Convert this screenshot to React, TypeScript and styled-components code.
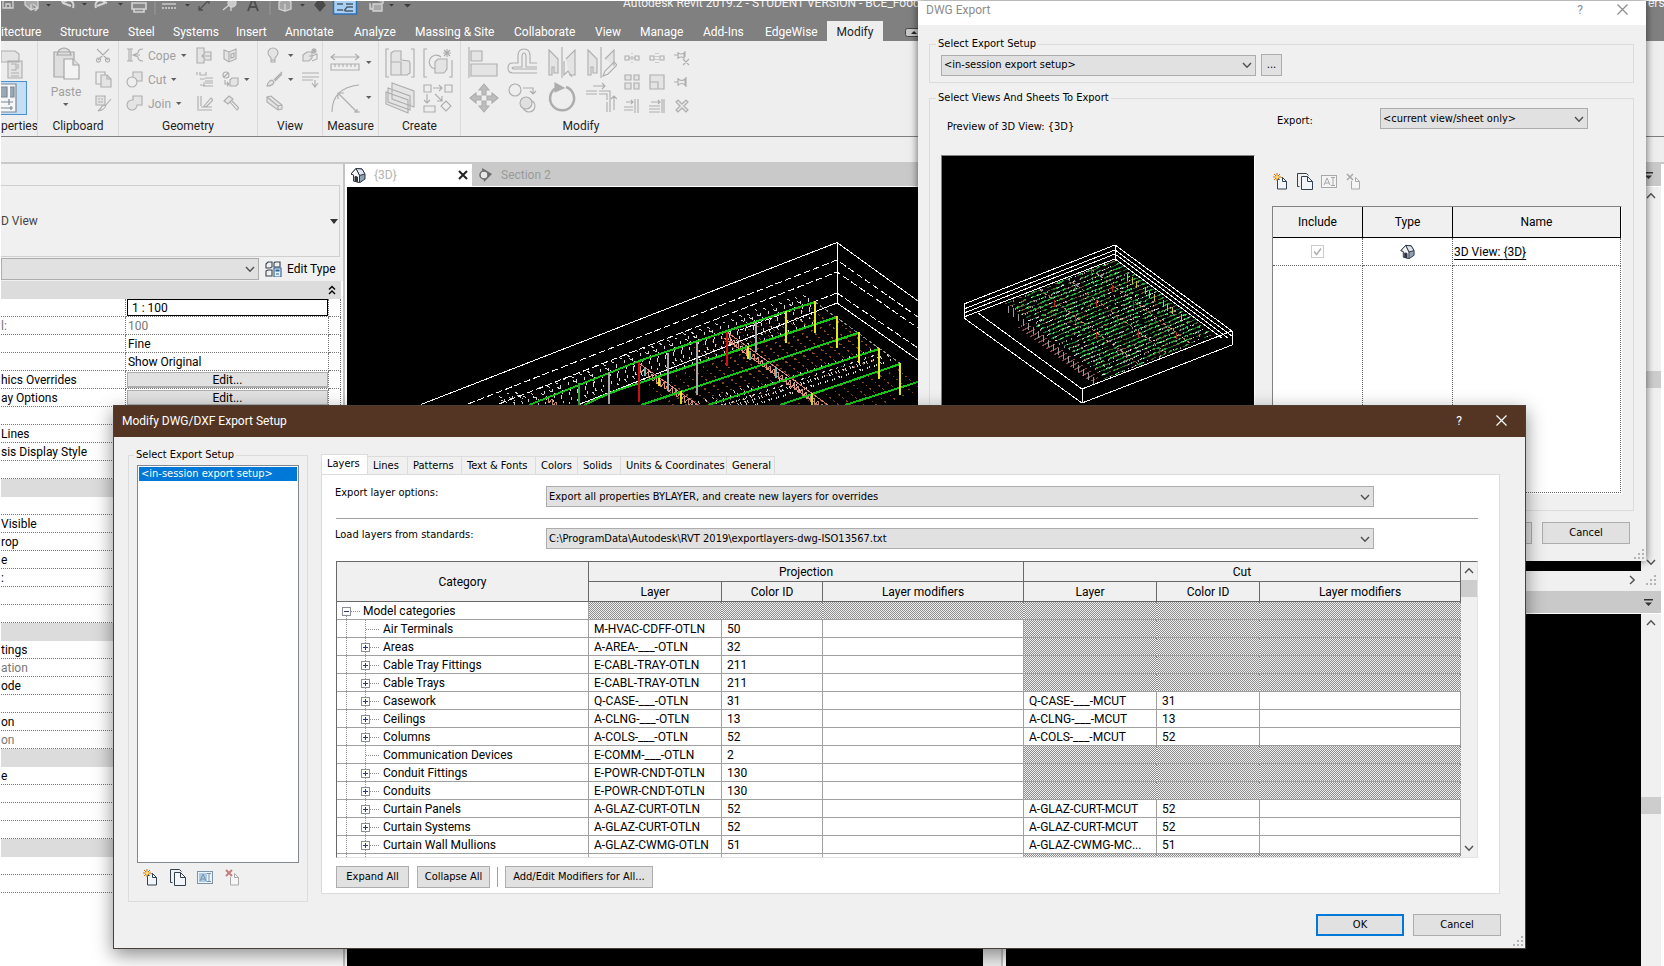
import React from 'react';
import styled, { createGlobalStyle, css } from 'styled-components';

const ribbonFont = 'Roboto, "Open Sans", sans-serif';
const dialogFont = '"DejaVu Sans Condensed", "DejaVu Sans", sans-serif';

const GlobalStyle = createGlobalStyle`
  *, *::before, *::after { box-sizing: border-box; }
  body { margin: 0; background: #fff; font: 12px/16px ${ribbonFont}; color: #1e1e1e; }
  button, select, input { font: inherit; color: inherit; margin: 0; }
  button { cursor: default; }
`;

/* ---------- shared parts ---------- */

const Desktop = styled.div`
  position: relative;
  height: 100vh;
  overflow: hidden;
  padding: 1px 0 0 1px;
`;

const Svg = styled.svg`
  display: block;
  flex: none;
`;

const Spacer = styled.div<{ $grow?: number }>`
  flex: ${p => p.$grow ?? 1};
`;

const BareButton = styled.button`
  display: flex;
  align-items: center;
  gap: 5px;
  padding: 0;
  border: 0;
  background: none;
`;

const PushButton = styled.button<{ $w: number; $default?: boolean }>`
  width: ${p => p.$w}px;
  height: 22px;
  padding: 0;
  font: 11px/14px ${dialogFont};
  color: #000;
  background: #e1e1e1;
  border: ${p => (p.$default ? '2px solid #0078d7' : '1px solid #adadad')};
`;

const SelectBox = styled.div<{ $w?: number }>`
  display: grid;
  align-items: center;
  height: 21px;
  ${p => (p.$w ? `width: ${p.$w}px; flex: none;` : 'flex: 1;')}
  background: #e1e1e1;
  border: 1px solid #adadad;
  select {
    grid-area: 1 / 1;
    appearance: none;
    width: 100%;
    height: 19px;
    padding: 0 20px 0 2px;
    border: 0;
    background: none;
    color: #000;
  }
  svg {
    grid-area: 1 / 1;
    justify-self: end;
    margin-right: 3px;
    pointer-events: none;
  }
`;

const Chevron = ({ dir = 'down', size = 10 }: { dir?: 'up' | 'down' | 'right'; size?: number }) => (
  <Svg width={size} height={size} viewBox="0 0 10 10" fill="none" stroke="#505050" strokeWidth="1.4">
    <path d={dir === 'down' ? 'M1 3l4 4.200l4-4.200' : dir === 'up' ? 'M1 7l4-4.200l4 4.200' : 'M3 1l4.200 4l-4.200 4'} />
  </Svg>
);

const Combo = ({ label, value, width, id }: { label: string; value: string; width?: number; id?: string }) => (
  <SelectBox $w={width}>
    <select aria-label={label} id={id} defaultValue={value}>
      <option>{value}</option>
    </select>
    <Chevron />
  </SelectBox>
);

const Caret = ({ color = '#606060' }: { color?: string }) => (
  <Svg width="6" height="4" viewBox="0 0 6 4"><path d="M0 0h5.500l-2.750 3z" fill={color} /></Svg>
);

const HouseIcon = ({ size = 16 }: { size?: number }) => (
  <Svg width={size} height={size} viewBox="0 0 16 16" strokeLinejoin="round" stroke="#2c3440" strokeWidth="1">
    <path d="M1 7l5-5.500l6 .5l3 5.500v4.500l-5 3.500l-6-1.500v-6z" fill="#8fa0b4" />
    <path d="M6 1.500l6 .5l3 5l-5.500 1.500z" fill="#dfe6ee" />
    <path d="M1 7l5-5.500l3.500 7v7l-6-1.500v-6z" fill="#f4f6f8" />
    <path d="M5 9.500l2.500.5v4.500l-2.500-.6z" fill="#2c3440" />
  </Svg>
);

const ScrollColumn = styled.div<{ $w: number }>`
  display: flex;
  flex-direction: column;
  align-items: center;
  flex: none;
  width: ${p => p.$w}px;
  padding: 4px 0;
  background: #f0f0f0;
`;

const ScrollThumb = styled.div`
  align-self: stretch;
  height: 17px;
  background: #cdcdcd;
`;

/* ---------- Revit header ---------- */

const Header = styled.header`
  display: flex;
  flex-direction: column;
  height: 40px;
  flex: none;
  background: #808080;
  color: #fff;
`;

const QuickAccess = styled.div`
  display: flex;
  align-items: flex-start;
  height: 20px;
  overflow: hidden;
`;

const TitleText = styled.span<{ $w?: number }>`
  line-height: 4px;
  white-space: nowrap;
  color: #f2f2f2;
  ${p => p.$w && `width: ${p.$w}px;`}
`;

const TabRow = styled.nav`
  display: flex;
  align-items: stretch;
  height: 20px;
`;

const RibbonTab = styled.button<{ $w: number; $active?: boolean }>`
  width: ${p => p.$w}px;
  flex: none;
  padding: 1px 0 0;
  border: 0;
  white-space: nowrap;
  text-align: ${p => (p.$active ? 'center' : 'left')};
  background: ${p => (p.$active ? '#eee' : 'none')};
  color: ${p => (p.$active ? '#1e1e1e' : '#fff')};
`;

const ribbonTabs: [string, number][] = [
  ['itecture', 59], ['Structure', 68], ['Steel', 45], ['Systems', 63], ['Insert', 49], ['Annotate', 69],
  ['Analyze', 61], ['Massing & Site', 99], ['Collaborate', 81], ['View', 45], ['Manage', 63],
  ['Add-Ins', 62], ['EdgeWise', 62],
];

const QuickIcons = () => (
  <Svg width="622" height="15" viewBox="1 1 622 15" fill="none" stroke="#d4d4d4" strokeWidth="1.300">
    <path d="M3 0v8h10v-8M6 8v-4h4v4" />
    <path d="M25 0v5l6 5l7-3v-6M31 10v-6M33 4l5 4l-3 3" fill="#a8a8a8" />
    <path d="M71 6l-8-3M62 2v-3M62 3l6-3q7 1 5 8M97 6l8-3M107 3l-6-3q-7 1-5 8" strokeWidth="2" />
    <path d="M132 3h14v6h-14zM134 9v3h10v-3" fill="#8a8a8a" strokeWidth="1.600" />
    <path d="M162 4h14" /><path d="M162 8h14" strokeDasharray="2 1" />
    <path d="M199 10l9-9M199 6v4h4M205 0h4v4" stroke="#4e4e4e" />
    <circle cx="232" cy="3" r="4" fill="#c8c8c8" /><path d="M223 10l6-5M231 7v4" />
    <path d="M248 11l5-13l5 13M250 7h7" stroke="#4e4e4e" strokeWidth="2" />
    <path d="M279 2l6-4l6 4v7l-6 2l-6-2zM285 4v7" fill="#a4a4a4" />
    <path d="M315 5l5-7l5 7l-5 6z" fill="#4a4a4a" stroke="#4a4a4a" />
    <rect x="333.500" y="-4" width="23" height="18" fill="#a9d1f5" stroke="#2d6fb5" strokeWidth="1.500" />
    <path d="M337 4h6M337 10h6M346 4h7M344 11l3-4h6M345 11h8" stroke="#4d5c6c" />
    <path d="M370 3v6h3M373 4h9v7h-9zM376 0h7v4" fill="#a8a8a8" />
    <path d="M155 0v15M270 0v15" stroke="#989898" strokeWidth="1" />
    <path d="M46 4h5l-2.500 2.500zM82 3h5l-2.500 2.500zM118 3h5l-2.500 2.500zM185 4h5l-2.500 2.500zM300 4h5l-2.500 2.500zM389 4h5l-2.500 2.500zM404 4h7l-3.500 3.500z" fill="#3c3c3c" stroke="none" />
  </Svg>
);

/* ---------- ribbon ---------- */

const Ribbon = styled.section`
  display: flex;
  height: 96px;
  flex: none;
  background: #eee;
  border-bottom: 1px solid #7f7f7f;
`;

const RibbonPanel = styled.div<{ $w: number; $last?: boolean }>`
  display: flex;
  flex-direction: column;
  flex: none;
  width: ${p => p.$w}px;
  border-right: ${p => (p.$last ? 0 : '1px solid #d9d9d9')};
  overflow: hidden;
`;

const PanelBody = styled.div<{ $gap?: number; $pad?: number }>`
  display: flex;
  flex: 1;
  gap: ${p => p.$gap ?? 8}px;
  padding: 6px 0 0 ${p => p.$pad ?? 8}px;
`;

const PanelLabel = styled.div`
  height: 20px;
  line-height: 21px;
  text-align: center;
  white-space: nowrap;
`;

const ToolColumn = styled.div<{ $gap?: number }>`
  display: flex;
  flex-direction: column;
  gap: ${p => p.$gap ?? 7}px;
`;

const ToolButton = styled(BareButton)`
  height: 17px;
  color: #a0a0a0;
`;

const BigTool = styled(BareButton)`
  gap: 6px;
  height: 32px;
`;

const PasteTool = styled(BareButton)`
  flex-direction: column;
  gap: 3px;
  width: 30px;
  align-self: flex-start;
  color: #a0a0a0;
`;

const Tile = styled.button<{ $on?: boolean }>`
  width: 26px;
  height: 34px;
  padding: 0;
  border: 1px solid ${p => (p.$on ? '#4a90d0' : 'transparent')};
  border-left: 0;
  background: ${p => (p.$on ? '#c4dff5' : 'none')};
`;

const G = ({ s = 17, d, fill, children }: { s?: number; d?: string; fill?: string; children?: React.ReactNode }) => (
  <Svg width={s} height={s} viewBox={`0 0 ${s} ${s}`} fill="none" stroke="#adadad" strokeWidth="1.100">
    {fill && <path d={fill} fill="#e4e4e4" />}
    {d && <path d={d} />}
    {children}
  </Svg>
);

const I = {
  cut: <G d="M2 2l11 11M14 2l-11 11M1.500 13.500a2 2 0 1 0 4-1a2 2 0 1 0-4 1M10.500 12.500a2 2 0 1 0 4 1a2 2 0 1 0-4-1" />,
  copy: <G fill="M6 4h6l4 4v8h-10z" d="M6 13h-5v-12h9v3M12 4v4h4" />,
  match: <G fill="M1 1h9v9h-9z" d="M3 4h2M6 4h2M3 7h5M16 4l-6 7M11 10q-1 5-8 6q3-2 4-5z" />,
  cope: <G d="M1 2h6M1 14h6M3 2v12M5 2v12M17 2q-5 0-5 4l-5 2l5 2q0 4 5 4M7 8h7" />,
  cutGeo: <G fill="M7 1h9v9h-9z"><circle cx="6" cy="11" r="5" fill="#eee" /></G>,
  join: <G fill="M7 1h9v9h-5a5 5 0 1 1-5-5h1z" />,
  g1: <G fill="M1 1h7v4h7v8h-7v3h-7z" d="M15 9h-9M9 6l-3 3l3 3" />,
  g2: <G d="M1 1v3M4 1v3h6v-3M4 8h5M9 7h8M9 10h8M4 14h5M7 12h10M7 15h10" />,
  g3: <G d="M2 1v13M5 1v10M1 15h15M5 12h11M8 11l7-8l2 2l-7 7z" />,
  h1: <G fill="M2 3l5 2l7-3v10l-7 3l-5-3z" d="M7 5v10M9 7l4-1M9 7v4l3-1v-4" />,
  h2: <G fill="M8 9l2-2h6v6l-2 2h-6z" d="M1 4a3 3 0 1 0 6 0a3 3 0 1 0-6 0M2 6l4-4M3 9v4h4M5 11l2 2l-2 2" />,
  h3: <G fill="M2 6l5-5l4 3l-5 5z" d="M8 7l7 8l2-2l-7-7" />,
  bulb: <G fill="M5 11q-3-3-3-5a5 5 0 0 1 10 0q0 2-3 5v4h-4z" d="M5 13h4" />,
  brush: <G fill="M1 15q1-5 5-6l2 2q-1 4-7 4z" d="M16 1l-8 8M16 3l-7 7" />,
  box: <G fill="M1 2l4-1l11 9v4l-4 1l-11-8z" d="M1 2l11 9v4M12 11l4-1" />,
  v1: <G fill="M1 8l4-3h5v6l-3 3h-6z" d="M12 1v6M9 4h6M10 2l4 4M14 2l-4 4M7 9h3M10 9l5-2v5l-5 2" />,
  v2: <G d="M0 2h17M0 6h17M0 9h11" ><path d="M13 9v6M10 12l3 4l3-4" /></G>,
  splitA: <G s={16} d="M1 6h4v4h-4zM11 6h4v4h-4zM5 8h6" ><path d="M8 3v10" strokeDasharray="1 2" /></G>,
  splitB: <G s={16} d="M1 6h4v4h-4zM11 6h4v4h-4z"><path d="M7 3v10M9 3v10" strokeDasharray="1 2" /></G>,
  unpin: <G s={16} d="M0 5h4M4 2v7M4 3q3 2 6 0v5q-3-2-6 0M11 1v6M9 9l6 6M15 9l-6 6" />,
  array: <G s={16} fill="M1 1h6v5h-6zM10 1h5v5h-5zM1 9h6v6h-6zM10 9h5v6h-5z" />,
  scale: <G s={16} fill="M1 1h14v14h-14z" d="M1 8h8v7" />,
  pin: <G s={16} d="M0 8h4M4 4v8M4 5q4 3 7 0v6q-3-3-7 0M12 3v10" />,
  trim: <G s={16} d="M2 4h7M7 2l2 2l-2 2M0 9h9M0 12h9M11 1v14M14 1v14" />,
  trimM: <G s={16} d="M2 4h9M9 2l2 2l-2 2M0 8h11M0 11h11M0 14h11M13 1v14M15 1v14" />,
  del: <G s={16} fill="M2 4l2-2l4 4l4-4l2 2l-4 4l4 4l-2 2l-4-4l-4 4l-2-2l4-4z" />,
  ruler: <G s={30} d="M1 9h28M5 6l-4 3l4 3M25 6l4 3l-4 3M1 16h28v6h-28zM5 16v3M9 16v3M13 16v3M17 16v3M21 16v3M25 16v3" />,
  arc: <G s={30} d="M2 29q0-24 27-27M8 10l19 19M8 16v-6h6M24 29h6M27 26v6" />,
  asm: <G s={30} fill="M6 5l3-2h7v9l8 1l1 2v10l-3 2h-16z" d="M6 14h10M16 14v13M4 1h-3v28h3M26 1h3v28h-3" />,
  part: <G s={30} fill="M12 14l3-3h9v10l-3 4h-9z" d="M12 21a7 7 0 1 1 6-12M4 1h-3v28h3M29 12v17h-3M24 1v8M20 5h8M21 2l6 6M27 2l-6 6" />,
  group: <G s={32} fill="M7 1l22 8v16l-22-8zM3 6l22 8v14l-22-8zM1 10l22 8v13l-22-9z" />,
  similar: <G s={30} d="M1 2h7v7h-7zM22 2h7v7h-7zM10 5h9M16 2l3 3l-3 3M4 11v9M1 17l3 3l3-3M12 11l7 7M19 13v5h-5M1 23h11v6h-11zM23 18l5 5l-5 5l-5-5z" />,
  align: <G s={32} fill="M3 4h11v10h-11zM3 17h26v12h-26z" d="M1 0v31" />,
  offset: <G s={32} d="M30 26h-24q-5 0-5-5t5-5h5v-7q0-7 6-7t6 7v7h7M30 22h-23q-2 0-2-1t2-1h8v-10q0-4 2-4t2 4v10h11" />,
  mirrorA: <G s={32} fill="M3 3l9 9v14h-4v-6h-2v8h-3zM20 12l9-9v25h-6" d="M16 0v31M18 14v14l4-4l4 6" />,
  mirrorB: <G s={32} fill="M3 3l9 9v14h-4v-6h-2v8h-3zM20 12l9-9v16" d="M16 0v31M18 29l2-5l9-9l3 3l-9 9z" />,
  move: <G s={32}><path d="M16 2l5 6h-3v5h-4v-5h-3zM16 30l5-6h-3v-5h-4v5h-3zM2 16l6-5v3h5v4h-5v3zM30 16l-6-5v3h-5v4h5v3z" fill="#bdbdbd" /></G>,
  dup: <G s={32}><circle cx="8" cy="8" r="6" /><circle cx="22" cy="24" r="6" /><circle cx="19" cy="21" r="6" fill="#e0e0e0" /><path d="M16 6h10v6M23 9l3 3l3-3" /></G>,
  rotate: <G s={32}><path d="M10 6a12 12 0 1 0 10-1" strokeWidth="2.500" /><path d="M9 1l9 5l-9 4z" fill="#adadad" /></G>,
  corner: <G s={32} d="M8 4h12M17 1l3 3l-3 3M1 9h11M1 12h11M14 9h11v21M14 12h8v6M22 20v10M29 28v-14M26 17l3-3l3 3" />,
  browser: (
    <G s={30} fill="M0 2h14l4 3v8h-18zM7 12h14v17h-14z" d="M10 15h5v6h-5M17 15v5M10 24h8M10 27h8" />
  ),
  props: (
    <Svg width="22" height="31" viewBox="0 0 22 31" fill="#f4f6f8" stroke="#7a8794" strokeWidth="1.200">
      <path d="M-3 1h18v28h-18z" /><path d="M-2 4h8v10h-8zM9 4h4v10h-4" fill="#9aa8b6" /><path d="M0 19h12M8 16v6M0 25h12M10 23v4" />
    </Svg>
  ),
};

/* ---------- workspace ---------- */

const RevitWindow = styled.main`
  display: flex;
  flex-direction: column;
  height: 100%;
`;

const OptionsBar = styled.div`
  height: 27px;
  flex: none;
  background: #eee;
  border-bottom: 2px solid #c9c9c9;
`;

const Workspace = styled.div`
  display: flex;
  flex: 1;
  min-height: 0;
`;

const Properties = styled.aside`
  display: flex;
  flex-direction: column;
  width: 344px;
  flex: none;
  background: #fff;
  border-right: 2px solid #c4c4c4;
  color: #000;
`;

const PropHead = styled.div`
  background: #f0f0f0;
  padding: 21px 3px 0 0;
`;

const TypePreview = styled.div`
  display: flex;
  align-items: center;
  justify-content: space-between;
  height: 72px;
  padding-right: 1px;
  border: 1px solid #cfcfcf;
  border-left: 0;
  color: #444;
`;

const TypeRow = styled.div`
  display: flex;
  align-items: center;
  gap: 6px;
  height: 24px;
`;

const TypeSelect = styled(SelectBox)`
  height: 22px;
`;

const PropTable = styled.table`
  width: 340px;
  table-layout: fixed;
  border-collapse: separate;
  border-spacing: 0;
`;

const PropCell = styled.td<{ $muted?: boolean }>`
  height: 18px;
  padding: 0 0 0 1px;
  line-height: 16px;
  border-right: 1px dotted #777;
  border-bottom: 1px dotted #777;
  white-space: nowrap;
  overflow: hidden;
  color: ${p => (p.$muted ? '#777' : '#000')};
`;

const NameCell = styled(PropCell)`
  padding-left: 0;
`;

const ValueCell = styled(PropCell)`
  padding-left: 2px;
`;

const GroupCell = styled.td`
  height: 18px;
  padding: 0 4px 0 0;
  background: #dcdcdc;
  text-align: right;
  svg { margin-left: auto; }
`;

const ScaleInput = styled.input`
  display: block;
  width: 100%;
  height: 17px;
  padding: 0 4px;
  border: 1px solid #000;
  background: #fff;
`;

const CellButton = styled.button`
  display: block;
  width: 100%;
  height: 16px;
  padding: 0;
  line-height: 14px;
  border: 1px solid #adadad;
  border-bottom-width: 2px;
  background: #e1e1e1;
`;

type Prop = { name?: string; value?: string; kind?: 'group' | 'input' | 'edit' | 'muted' };
const props: Prop[] = [
  { value: '1 : 100', kind: 'input' },
  { name: 'l:', value: '100', kind: 'muted' },
  { value: 'Fine' },
  { value: 'Show Original' },
  { name: 'hics Overrides', kind: 'edit' },
  { name: 'ay Options', kind: 'edit' },
  {}, { name: 'Lines' }, { name: 'sis Display Style' }, {},
  { kind: 'group' },
  {}, { name: 'Visible' }, { name: 'rop' }, { name: 'e' }, { name: ':' }, {}, {},
  { kind: 'group' },
  { name: 'tings' }, { name: 'ation', kind: 'muted' }, { name: 'ode' }, {}, { name: 'on' }, { name: 'on', kind: 'muted' },
  { kind: 'group' },
  { name: 'e' }, {}, {}, {},
  { kind: 'group' },
  {}, {},
];

const Views = styled.div`
  display: flex;
  flex-direction: column;
  flex: 1;
  min-width: 0;
  padding-right: 3px;
  background: #fff;
`;

const ViewTabs = styled.div`
  display: flex;
  align-items: center;
  height: 22px;
  flex: none;
  margin-bottom: 1px;
  padding-right: 8px;
  background: #c9c9c9;
  color: #9a9a9a;
`;

const ActiveTab = styled.div`
  display: flex;
  align-items: center;
  gap: 8px;
  width: 127px;
  height: 22px;
  padding: 0 4px 0 5px;
  background: #fff;
  color: #b4b4b4;
`;

const IdleTab = styled(BareButton)`
  gap: 8px;
  padding-left: 6px;
`;

const ViewPane = styled.div<{ $grow?: boolean }>`
  display: flex;
  ${p => (p.$grow ? 'flex: 1; min-height: 0;' : 'height: 384px; flex: none;')}
  padding-left: 2px;
`;

const Canvas = styled.div<{ $w?: number }>`
  ${p => (p.$w ? `width: ${p.$w}px; flex: none;` : 'flex: 1; min-width: 0;')}
  overflow: hidden;
  background: #000;
`;

const HScroll = styled.div`
  display: flex;
  align-items: center;
  justify-content: flex-end;
  gap: 9px;
  height: 20px;
  flex: none;
  padding: 0 4px 2px 0;
  background: #f0f0f0;
`;

const LowerSplit = styled.div`
  width: 5px;
  background: #fff;
  border-left: 2px solid #c4c4c4;
`;

const Overflow = () => (
  <Svg width="9" height="9" viewBox="0 0 9 9" fill="#333"><path d="M0 1h9v1.500h-9zM1 4.500h7l-3.500 3.500z" /></Svg>
);

const Grip = () => (
  <Svg width="11" height="11" viewBox="0 0 11 11" fill="#b4b4b4">
    <path d="M8 0h2v2h-2zM8 4h2v2h-2zM4 4h2v2h-2zM8 8h2v2h-2zM4 8h2v2h-2zM0 8h2v2h-2z" />
  </Svg>
);

/* ---------- model drawings ---------- */

type Pt = [number, number];
const makeRandom = (seed: number) => () => {
  seed = (seed * 1664525 + 1013904223) % 4294967296;
  return seed / 4294967296;
};
const yOn = (line: Pt[], x: number) => {
  for (let i = 0; i < line.length - 1; i++) {
    const [a, b] = [line[i], line[i + 1]];
    if (x <= a[0] && x >= b[0]) return a[1] + ((b[1] - a[1]) * (a[0] - x)) / (a[0] - b[0]);
  }
  return 420;
};
const toPath = (line: Pt[]) => 'M' + line.map(p => p.join(' ')).join('L');

const beams: Pt[][] = [
  [[815, 302], [727, 331], [639, 361], [599, 377], [529, 405]],
  [[837, 317], [666, 374], [610, 393], [584, 405]],
  [[858, 333], [641, 405]],
  [[879, 349], [708, 405]],
  [[900, 364], [780, 405]],
  [[921, 381], [845, 405]],
];

const ModelView = () => {
  const rnd = makeRandom(7);
  const white: string[] = [];
  const brown: string[] = [];
  for (let x = 505; x < 812; x += 8) {
    const y = x < 529 ? 405 - (x - 505) * 0.3 : yOn(beams[0], x);
    white.push(`M${x - 6} ${(y - 8 - rnd() * 3).toFixed(1)}l5 3l3 10l-2 3`);
    if (x > 560) white.push(`M${x} ${(y + 3).toFixed(1)}l3 8l-3 2l4 7`);
    if (rnd() > 0.5) white.push(`M${x - 4} ${(y - 5).toFixed(1)}l6 3`);
  }
  for (let x = 700; x < 880; x += 7) {
    const y = yOn(beams[3], x);
    white.push(`M${x + 2} ${(y - 3).toFixed(1)}l3 6l-3 3l5 8`);
    white.push(`M${x + 12} ${(y + 4).toFixed(1)}l4 7`);
    if (x < 780) white.push(`M${x - 30} ${(y + 3).toFixed(1)}l5 6l-2 4l4 7`);
  }
  [0, 1, 2, 4].forEach(k => {
    for (let x = k < 1 ? 690 : 625 + k * 20; x < 820 + k * 20; x += 9) {
      const y = yOn(beams[k], x);
      brown.push(`M${x} ${y.toFixed(1)}l28 24`);
    }
  });
  const truss: string[] = [];
  for (let i = 0; i < 26; i++) truss.push(`M${726 + i * 4} ${(334 + i * 2.9).toFixed(1)}l1 7l3-4`);
  for (let i = 0; i < 15; i++) truss.push(`M${640 + i * 4} ${(366 + i * 2.7).toFixed(1)}l1 7l3-4`);
  for (let i = 0; i < 5; i++) truss.push(`M${548 + i * 4} ${396 + i * 3}l1 7l3-4`);
  return (
    <Svg width="571" height="384" viewBox="347 187 571 384" fill="none" shapeRendering="crispEdges">
      <path d={brown.join('')} stroke="#8a4a1c" strokeDasharray="2 3" />
      <path d={white.join('')} stroke="#d8d8d8" strokeDasharray="3 3" />
      <path d="M421 404.500L837 242.500L918 301M837 242v61L918 360" stroke="#fff" />
      <path d="M580 404L837 303" stroke="#fff" />
      <path d="M468 404L837 260L918 317M499 404L837 272L918 328M837 293L918 348M837 293L740 330" stroke="#fff" strokeDasharray="7 3" />
      <path d="M815 302L901 364" stroke="#8e8e8e" strokeDasharray="4 2" />
      <path d={truss.join('')} stroke="#d99a7a" />
      <path d="M727 332L828 405M724 338L818 405M640 364L698 405" stroke="#e08a80" />
      <path d={beams.map(toPath).join('')} stroke="#18c618" strokeWidth="2" />
      <path d="M756 322v30M697 342v53M667.500 353v38M609 372v32" stroke="#a8a8a8" strokeWidth="2" />
      <path d="M579 383v22" stroke="#30a040" strokeWidth="2" />
      <path d="M727 332v34M639 362v40" stroke="#d01010" strokeWidth="2" />
      <path d="M815 301v32M786 311v32M837 316v32M859 332v31M879 348v31M900 363v32M748 346v13M659 378v8M681 391v13M812 393v12" stroke="#e6e61e" strokeWidth="2" />
      <path d="M645 368v8M776 368v10M750 352v8" stroke="#6fb7b7" strokeWidth="2" />
    </Svg>
  );
};

const PreviewView = () => {
  const rnd = makeRandom(21);
  // corners of the roof framing, used for bilinear placement of members
  const [a, b, c, d]: Pt[] = [[1113, 261], [1005, 303], [1104, 378], [1211, 334]];
  const at = (u: number, v: number): Pt => [
    a[0] * (1 - u) * (1 - v) + b[0] * u * (1 - v) + c[0] * u * v + d[0] * (1 - u) * v,
    a[1] * (1 - u) * (1 - v) + b[1] * u * (1 - v) + c[1] * u * v + d[1] * (1 - u) * v,
  ];
  const palette: [string, number, string][] = [
    ['#156b25', 900, '4 -1'], ['#27a83c', 620, '3 -1'], ['#e6e6e6', 520, '1 0'], ['#7d5030', 260, '2 0'], ['#9a9a9a', 260, '1 1'],
  ];
  const layers = palette.map(([color, n, step]) => {
    let path = '';
    for (let i = 0; i < n; i++) {
      const [x, y] = at(rnd(), Math.round(rnd() * 26) / 26);
      path += `M${x.toFixed(0)} ${y.toFixed(0)}.5l${step}`;
    }
    return <path key={color} d={path} stroke={color} />;
  });
  let redPosts = '';
  let foot = '';
  let legs = '';
  let yellow = '';
  for (let i = 0; i < 14; i++) {
    const [x, y] = at([0.2, 0.42, 0.68][i % 3], i / 14);
    redPosts += `M${x.toFixed(0)} ${y.toFixed(0)}v7`;
    const [ex, ey] = at(0.02, 0.12 + i / 22);
    if (i % 4) yellow += `M${ex.toFixed(0)} ${ey.toFixed(0)}v7`;
  }
  for (let i = 0; i < 18; i++) {
    foot += `M${1018 + i * 4} ${328 + Math.round(i * 3)}l9 -5m-4 7l8 -4`;
    legs += `M${1008 + i * 5} ${306 + Math.round(i * 4.2)}v7`;
  }
  return (
    <Svg width="311" height="338" viewBox="942 156 311 338" fill="none" shapeRendering="crispEdges">
      <path d={foot} stroke="#8c4c48" strokeDasharray="2 1" />
      {layers}
      <path d={toPath([at(0.2, 0), at(0.2, 1)]) + toPath([at(0.42, 0), at(0.42, 1)]) + toPath([at(0.68, 0), at(0.68, 1)])} stroke="#b98463" strokeDasharray="3 3" />
      <path d={legs} stroke="#9a9a9a" />
      <path d={redPosts} stroke="#b22" />
      <path d={yellow} stroke="#c8c83a" />
      <path d="M964 304L1115 245L1232 331v14L1082 403L964 318zM1082 389v14M964 309L1115 250L1232 336M964 313L1115 254L1228 338M964 317L1115 259L1222 338M1115 245v16M978 313L1082 389L1232 331" stroke="#fff" />
    </Svg>
  );
};

/* ---------- dialogs ---------- */

const dialogBase = css`
  position: absolute;
  display: flex;
  flex-direction: column;
  background: #f0f0f0;
  color: #000;
  font: 11px/14px ${dialogFont};
`;

const ExportDialog = styled.section`
  ${dialogBase}
  top: 1px;
  right: 18px;
  width: 728px;
  height: 560px;
  box-shadow: 0 0 8px rgba(0, 0, 0, 0.6);
`;

const SetupDialog = styled.section`
  ${dialogBase}
  top: 405px;
  left: 113px;
  right: 138px;
  border: 1px solid #4b4039;
  box-shadow: 0 6px 18px rgba(0, 0, 0, 0.45);
`;

const TitleBar = styled.header<{ $dark?: boolean }>`
  display: flex;
  align-items: center;
  gap: 34px;
  height: ${p => (p.$dark ? 31 : 24)}px;
  flex: none;
  padding: ${p => (p.$dark ? '0 18px 2px 8px' : '0 18px 7px 8px')};
  background: ${p => (p.$dark ? '#543524' : '#fff')};
  color: ${p => (p.$dark ? '#fff' : '#8c8c8c')};
  font: 12px/16px ${ribbonFont};
`;

const Group = styled.fieldset`
  min-width: 0;
  margin: 0;
  padding: 2px 11px 0;
  border: 1px solid #dcdcdc;
  legend {
    margin-left: -5px;
    padding: 0 2px;
    line-height: 16px;
  }
`;

const ExportBody = styled.div`
  display: flex;
  flex-direction: column;
  gap: 7px;
  padding: 11px 12px 0 11px;
`;

const SetupGroup = styled(Group)`
  height: 47px;
`;

const ViewsGroup = styled(Group)`
  height: 421px;
`;

const Line = styled.div<{ $gap?: number }>`
  display: flex;
  align-items: center;
  gap: ${p => p.$gap ?? 5}px;
`;

const ViewsColumns = styled.div`
  display: flex;
  gap: 17px;
`;

const PreviewColumn = styled.div`
  display: flex;
  flex-direction: column;
  gap: 20px;
  width: 314px;
  padding-top: 11px;
  line-height: 16px;
`;

const PreviewLabel = styled.div`
  padding-left: 6px;
`;

const PreviewFrame = styled.div`
  border: 1px solid #828282;
  border-right-color: #fff;
  border-bottom-color: #fff;
  background: #000;
`;

const ListColumn = styled.div`
  display: flex;
  flex-direction: column;
  flex: 1;
`;

const ExportRow = styled.div`
  display: flex;
  justify-content: space-between;
  padding: 0 34px 0 5px;
  label { padding-top: 6px; }
`;

const SheetFrame = styled.div`
  height: 288px;
  margin-top: 16px;
  border: 1px solid #828282;
  border-right-color: #fff;
  border-bottom-color: #fff;
  background: #fff;
`;

const SheetTable = styled.table`
  width: 100%;
  height: 286px;
  table-layout: fixed;
  border-collapse: separate;
  border-spacing: 0;
  font: 12px/16px ${ribbonFont};
  th {
    height: 31px;
    font-weight: 400;
    background: #f0f0f0;
    border-right: 1px solid #000;
    border-bottom: 1px solid #000;
  }
  td {
    height: 28px;
    padding: 0 2px 0 1px;
    border-right: 1px dotted #666;
    border-bottom: 1px dotted #666;
  }
  tr:last-child td { height: auto; }
  td > svg { display: block; margin: 0 auto; }
`;

const CheckWrap = styled.label`
  display: grid;
  justify-content: center;
  input, svg { grid-area: 1 / 1; }
`;

const CheckBox = styled.input`
  appearance: none;
  width: 13px;
  height: 13px;
  border: 1px solid #ccc;
  background: #fff;
`;

const NameLink = styled.a`
  color: #000;
  text-underline-offset: 3px;
`;

const ExportFooter = styled.div`
  display: flex;
  justify-content: flex-end;
  gap: 10px;
  padding: 11px 16px 0 0;
`;

const GripCorner = styled.div`
  position: absolute;
  right: 1px;
  bottom: 1px;
`;

const IconBar = styled.div<{ $gap: number; $top: number; $left: number }>`
  display: flex;
  gap: ${p => p.$gap}px;
  margin: ${p => p.$top}px 0 0 ${p => p.$left}px;
`;

const NewIcon = () => (
  <Svg width="16" height="17" viewBox="0 0 16 17" fill="none">
    <path d="M4.500 6.500h2M9.500 4.500l4 4v7.500h-9v-9.500M9.500 4.500h-1" fill="#f2f6fa" stroke="#33404d" /><path d="M9.500 4.500v4h4" stroke="#33404d" />
    <path d="M4 0v8M0 4h8M1 1l6 6M7 1l-6 6" stroke="#e07000" /><circle cx="4" cy="4" r="1.500" fill="#ffe060" />
  </Svg>
);
const CopyIcon = () => (
  <Svg width="16" height="17" viewBox="0 0 16 17" stroke="#33404d">
    <path d="M2.500 13.500h-2v-13h9l2 2" fill="none" /><path d="M4.500 3.500h6l5 5v8h-11z" fill="#f2f6fa" /><path d="M10.500 3.500v5h5" fill="none" />
  </Svg>
);
const RenameIcon = ({ blue }: { blue?: boolean }) => (
  <Svg width="17" height="17" viewBox="0 0 17 17" fill="none" stroke={blue ? '#7c93a6' : '#a8a8a8'}>
    <rect x="0.500" y="2.500" width="15" height="12" fill={blue ? '#eaf4fb' : '#f4f4f4'} />
    {blue && <path d="M2 4h8v9h-8z" fill="#a9cbe6" stroke="none" />}
    <path d="M3 12l3-7l3 7M4 10h4M10 4.500h4M12 4.500v8M10 12.500h4" />
  </Svg>
);
const DeleteIcon = ({ red }: { red?: boolean }) => (
  <Svg width="16" height="17" viewBox="0 0 16 17" fill="none" stroke="#aaa">
    <path d="M5.500 8v8h8v-7.500l-4-4" fill="#f6f6f6" /><path d="M9.500 4.500v4h4" />
    <path d="M1 1l6 6M7 1l-6 6" stroke={red ? '#c08080' : '#a8a8a8'} strokeWidth={red ? 2 : 1.500} />
  </Svg>
);

const SetupBody = styled.div`
  display: flex;
  gap: 13px;
  padding: 10px 25px 0 14px;
`;

const SideGroup = styled(Group)`
  width: 180px;
  flex: none;
  height: 455px;
  padding: 2px 8px 0;
  legend { margin-left: -3px; }
`;

const SetupList = styled.ul`
  height: 398px;
  margin: 0;
  padding: 1px;
  list-style: none;
  border: 1px solid #828790;
  background: #fff;
`;

const SetupItem = styled.li`
  height: 14px;
  padding-left: 2px;
  line-height: 14px;
  background: #0078d7;
  color: #fff;
`;

const TabsArea = styled.div`
  display: flex;
  flex-direction: column;
  flex: 1;
  min-width: 0;
  margin-top: 7px;
`;

const TabStrip = styled.div`
  display: flex;
  align-items: flex-end;
  height: 20px;
`;

const DialogTab = styled.button<{ $w: number; $active?: boolean }>`
  width: ${p => p.$w}px;
  height: ${p => (p.$active ? 21 : 18)}px;
  margin-bottom: ${p => (p.$active ? -1 : 0)}px;
  padding: 0 0 ${p => (p.$active ? 3 : 0)}px 5px;
  border: 1px solid #dcdcdc;
  border-bottom: 0;
  border-left-width: ${p => (p.$active ? 1 : 0)}px;
  background: ${p => (p.$active ? '#fff' : '#f0f0f0')};
  text-align: left;
  white-space: nowrap;
`;

const dialogTabs: [string, number][] = [
  ['Layers', 47], ['Lines', 40], ['Patterns', 54], ['Text & Fonts', 74], ['Colors', 42], ['Solids', 43], ['Units & Coordinates', 106], ['General', 48],
];

const TabPanel = styled.div`
  display: flex;
  flex-direction: column;
  height: 420px;
  padding: 11px 21px 0 14px;
  border: 1px solid #dcdcdc;
  background: #fff;
`;

const FormRow = styled.div`
  display: flex;
  align-items: flex-start;
  padding-right: 104px;
  label { width: 211px; margin-left: -1px; flex: none; line-height: 14px; }
`;

const Rule = styled.hr`
  width: 100%;
  height: 1px;
  margin: 11px 0 9px;
  border: 0;
  background: #a0a0a0;
`;

const GridFrame = styled.div`
  display: flex;
  height: 297px;
  flex: none;
  margin-top: 12px;
  overflow: hidden;
  border: 1px solid #696969;
  border-right-color: #e3e3e3;
  border-bottom-color: #e3e3e3;
`;

const GridTable = styled.table`
  flex: 1;
  align-self: flex-start;
  width: 0;
  table-layout: fixed;
  border-collapse: separate;
  border-spacing: 0;
  font: 12px/16px ${ribbonFont};
  th {
    height: 20px;
    padding: 0;
    font-weight: 400;
    background: #f0f0f0;
    border-right: 1px solid #696969;
    border-bottom: 1px solid #696969;
  }
`;

const GridCell = styled.td<{ $off?: boolean }>`
  height: 18px;
  padding: 1px 0 0 5px;
  line-height: 16px;
  white-space: nowrap;
  overflow: hidden;
  text-overflow: ellipsis;
  border-right: 1px solid #a0a0a0;
  border-bottom: 1px solid #a0a0a0;
  ${p => p.$off && css`
    background: repeating-conic-gradient(#8c8c8c 0 25%, #f0f0f0 0 50%) 0 0 / 2px 2px;
    border-right: 1px dotted #888;
  `}
`;

const TreeCell = styled(GridCell)`
  padding: 0;
`;

const TreeLine = styled.div`
  display: flex;
  height: 17px;
  line-height: 18px;
`;

const TreeLines = ({ root, box }: { root?: boolean; box?: boolean }) => {
  const bx = root ? 5 : 24;
  return (
    <Svg width={root ? 26 : 46} height="18" viewBox={`0 0 ${root ? 26 : 46} 18`} fill="none" stroke="#909090" shapeRendering="crispEdges">
      <path d={root ? 'M9.500 14v4M14 9.500h10' : 'M9.500 0v18M28.500 0v18M29 9.500h14'} strokeDasharray="1 1" />
      {box && (
        <>
          <rect x={bx + 0.5} y="5.500" width="8" height="8" fill="#fff" stroke="#8a8f96" />
          <path d={`M${bx + 2} 9.500h5${root ? '' : `M${bx + 4.5} 7v5`}`} stroke="#2b3a6b" />
        </>
      )}
    </Svg>
  );
};

type Row = { name: string; layer?: string; color?: string; cut?: string; leaf?: boolean; root?: boolean };
const rows: Row[] = [
  { name: 'Model categories', root: true },
  { name: 'Air Terminals', layer: 'M-HVAC-CDFF-OTLN', color: '50', leaf: true },
  { name: 'Areas', layer: 'A-AREA-___-OTLN', color: '32' },
  { name: 'Cable Tray Fittings', layer: 'E-CABL-TRAY-OTLN', color: '211' },
  { name: 'Cable Trays', layer: 'E-CABL-TRAY-OTLN', color: '211' },
  { name: 'Casework', layer: 'Q-CASE-___-OTLN', color: '31', cut: 'Q-CASE-___-MCUT' },
  { name: 'Ceilings', layer: 'A-CLNG-___-OTLN', color: '13', cut: 'A-CLNG-___-MCUT' },
  { name: 'Columns', layer: 'A-COLS-___-OTLN', color: '52', cut: 'A-COLS-___-MCUT' },
  { name: 'Communication Devices', layer: 'E-COMM-___-OTLN', color: '2', leaf: true },
  { name: 'Conduit Fittings', layer: 'E-POWR-CNDT-OTLN', color: '130' },
  { name: 'Conduits', layer: 'E-POWR-CNDT-OTLN', color: '130' },
  { name: 'Curtain Panels', layer: 'A-GLAZ-CURT-OTLN', color: '52', cut: 'A-GLAZ-CURT-MCUT' },
  { name: 'Curtain Systems', layer: 'A-GLAZ-CURT-OTLN', color: '52', cut: 'A-GLAZ-CURT-MCUT' },
  { name: 'Curtain Wall Mullions', layer: 'A-GLAZ-CWMG-OTLN', color: '51', cut: 'A-GLAZ-CWMG-MC...' },
  { name: '', leaf: true },
];

const GridActions = styled.div`
  display: flex;
  align-items: center;
  gap: 8px;
  margin-top: 8px;
`;

const Divider = styled.div`
  width: 1px;
  height: 20px;
  margin: 0 -1px;
  background: #a0a0a0;
`;

const SetupFooter = styled.footer`
  display: flex;
  justify-content: flex-end;
  gap: 9px;
  padding: 12px 24px 12px 0;
`;

const CloseIcon = ({ color, size = 11 }: { color: string; size?: number }) => (
  <Svg width={size} height={size} viewBox="0 0 11 11" stroke={color} strokeWidth="1.200"><path d="M.5 .5l10 10M10.500 .5l-10 10" /></Svg>
);

/* ---------- composition ---------- */

const RevitRibbon = () => (
  <Ribbon>
    <RibbonPanel $w={37}>
      <PanelBody $pad={0}>
        <ToolColumn $gap={0}>
          <Tile aria-label="Type Properties">{I.browser}</Tile>
          <Tile $on aria-label="Properties">{I.props}</Tile>
        </ToolColumn>
      </PanelBody>
      <PanelLabel>perties</PanelLabel>
    </RibbonPanel>
    <RibbonPanel $w={81}>
      <PanelBody $gap={14} $pad={13}>
        <PasteTool>
          <Svg width="28" height="34" viewBox="0 0 28 34" fill="#dedede" stroke="#a6a6a6" strokeWidth="1.200">
            <path d="M2 5h20v25h-20zM7 3q5-4 10 0l2 5h-14z" /><path d="M12 12h9l6 6v14h-15z" fill="#f3f3f3" /><path d="M21 12v6h6" />
          </Svg>
          Paste
          <Caret />
        </PasteTool>
        <ToolColumn>
          <ToolButton aria-label="Cut to clipboard">{I.cut}</ToolButton>
          <ToolButton aria-label="Copy to clipboard">{I.copy}</ToolButton>
          <ToolButton aria-label="Match type">{I.match}</ToolButton>
        </ToolColumn>
      </PanelBody>
      <PanelLabel>Clipboard</PanelLabel>
    </RibbonPanel>
    <RibbonPanel $w={139}>
      <PanelBody $gap={9} $pad={7}>
        <ToolColumn>
          <ToolButton>{I.cope}Cope<Caret /></ToolButton>
          <ToolButton>{I.cutGeo}Cut<Caret /></ToolButton>
          <ToolButton>{I.join}Join<Caret /></ToolButton>
        </ToolColumn>
        <ToolColumn>
          <ToolButton aria-label="Apply coping">{I.g1}</ToolButton>
          <ToolButton aria-label="Wall joins">{I.g2}</ToolButton>
          <ToolButton aria-label="Beam joins">{I.g3}</ToolButton>
        </ToolColumn>
        <ToolColumn>
          <ToolButton aria-label="Split face">{I.h1}</ToolButton>
          <ToolButton aria-label="Paint">{I.h2}<Caret /></ToolButton>
          <ToolButton aria-label="Demolish">{I.h3}</ToolButton>
        </ToolColumn>
      </PanelBody>
      <PanelLabel>Geometry</PanelLabel>
    </RibbonPanel>
    <RibbonPanel $w={65}>
      <PanelBody>
        <ToolColumn>
          <ToolButton aria-label="Hide in view">{I.bulb}<Caret /></ToolButton>
          <ToolButton aria-label="Override graphics">{I.brush}<Caret /></ToolButton>
          <ToolButton aria-label="Selection box">{I.box}</ToolButton>
        </ToolColumn>
        <ToolColumn>
          <ToolButton aria-label="Displace elements">{I.v1}</ToolButton>
          <ToolButton aria-label="Linework">{I.v2}</ToolButton>
        </ToolColumn>
      </PanelBody>
      <PanelLabel>View</PanelLabel>
    </RibbonPanel>
    <RibbonPanel $w={56}>
      <PanelBody $pad={7}>
        <ToolColumn $gap={3}>
          <BigTool aria-label="Measure">{I.ruler}<Caret /></BigTool>
          <BigTool aria-label="Dimension">{I.arc}<Caret /></BigTool>
        </ToolColumn>
      </PanelBody>
      <PanelLabel>Measure</PanelLabel>
    </RibbonPanel>
    <RibbonPanel $w={82}>
      <PanelBody $gap={6} $pad={6}>
        <ToolColumn $gap={3}>
          <BigTool aria-label="Create assembly">{I.asm}</BigTool>
          <BigTool aria-label="Create group">{I.group}</BigTool>
        </ToolColumn>
        <ToolColumn $gap={3}>
          <BigTool aria-label="Create parts">{I.part}</BigTool>
          <BigTool aria-label="Create similar">{I.similar}</BigTool>
        </ToolColumn>
      </PanelBody>
      <PanelLabel>Create</PanelLabel>
    </RibbonPanel>
    <RibbonPanel $w={240} $last>
      <PanelBody $gap={7} $pad={7}>
        <ToolColumn $gap={3}>
          <BigTool aria-label="Align">{I.align}</BigTool>
          <BigTool aria-label="Move">{I.move}</BigTool>
        </ToolColumn>
        <ToolColumn $gap={3}>
          <BigTool aria-label="Offset">{I.offset}</BigTool>
          <BigTool aria-label="Copy">{I.dup}</BigTool>
        </ToolColumn>
        <ToolColumn $gap={3}>
          <BigTool aria-label="Mirror, pick axis">{I.mirrorA}</BigTool>
          <BigTool aria-label="Rotate">{I.rotate}</BigTool>
        </ToolColumn>
        <ToolColumn $gap={3}>
          <BigTool aria-label="Mirror, draw axis">{I.mirrorB}</BigTool>
          <BigTool aria-label="Trim to corner">{I.corner}</BigTool>
        </ToolColumn>
        <Line $gap={9}>
          <ToolColumn>
            <ToolButton aria-label="Split element">{I.splitA}</ToolButton>
            <ToolButton aria-label="Array">{I.array}</ToolButton>
            <ToolButton aria-label="Trim single">{I.trim}</ToolButton>
          </ToolColumn>
          <ToolColumn>
            <ToolButton aria-label="Split with gap">{I.splitB}</ToolButton>
            <ToolButton aria-label="Scale">{I.scale}</ToolButton>
            <ToolButton aria-label="Trim multiple">{I.trimM}</ToolButton>
          </ToolColumn>
          <ToolColumn>
            <ToolButton aria-label="Unpin">{I.unpin}</ToolButton>
            <ToolButton aria-label="Pin">{I.pin}</ToolButton>
            <ToolButton aria-label="Delete">{I.del}</ToolButton>
          </ToolColumn>
        </Line>
      </PanelBody>
      <PanelLabel>Modify</PanelLabel>
    </RibbonPanel>
  </Ribbon>
);

const PropertyRow = ({ p }: { p: Prop }) => {
  if (p.kind === 'group') {
    return <tr><GroupCell colSpan={3} /></tr>;
  }
  return (
    <tr>
      <NameCell $muted={p.kind === 'muted'}>{p.name}</NameCell>
      {p.kind === 'input' || p.kind === 'edit' ? (
        <PropCell>
          {p.kind === 'input' ? <ScaleInput aria-label="View scale" defaultValue={p.value} /> : <CellButton>Edit...</CellButton>}
        </PropCell>
      ) : (
        <ValueCell $muted={p.kind === 'muted'}>{p.value}</ValueCell>
      )}
      <PropCell />
    </tr>
  );
};

const PropertiesPanel = () => (
  <Properties>
    <PropHead>
      <TypePreview>
        D View
        <Svg width="8" height="5" viewBox="0 0 8 5"><path d="M0 0h8l-4 5z" fill="#333" /></Svg>
      </TypePreview>
      <TypeRow>
        <TypeSelect $w={258}>
          <select aria-label="Type selector"><option></option></select>
          <Chevron />
        </TypeSelect>
        <BareButton>
          <Svg width="17" height="16" viewBox="0 0 17 16" fill="none" stroke="#36424e" strokeWidth="1.100">
            <path d="M1 3l2-2h4v5l-2 1h-4zM9 2l1-1h5v5h-6zM1 10l2-1h4v6h-6z" /><path d="M9 7h7v9h-7z" fill="#e8f2fb" stroke="#2b5f94" /><path d="M11 9h3v1h-3zM11 13h3" stroke="#2b5f94" />
          </Svg>
          Edit Type
        </BareButton>
      </TypeRow>
    </PropHead>
    <PropTable>
      <colgroup><col /><col width="203" /><col width="12" /></colgroup>
      <tbody>
        <tr>
          <GroupCell colSpan={3}>
            <Svg width="10" height="10" viewBox="0 0 10 10" fill="none" stroke="#000" strokeWidth="1.400"><path d="M2 4.500l3-3l3 3M2 9l3-3l3 3" /></Svg>
          </GroupCell>
        </tr>
        {props.map((p, i) => <PropertyRow key={i} p={p} />)}
      </tbody>
    </PropTable>
  </Properties>
);

const ViewsArea = () => (
  <Views>
    <ViewTabs>
      <ActiveTab>
        <HouseIcon />{'{3D}'}<Spacer />
        <BareButton aria-label="Close view">
          <Svg width="10" height="10" viewBox="0 0 10 10" stroke="#222" strokeWidth="2"><path d="M1 1l8 8M9 1l-8 8" /></Svg>
        </BareButton>
      </ActiveTab>
      <IdleTab>
        <Svg width="15" height="14" viewBox="0 0 15 14"><path d="M4 0l10 6l-8 8z" fill="#6c6c6c" /><circle cx="6" cy="7" r="4" fill="#e8e8e8" stroke="#6c6c6c" strokeWidth="1.500" /></Svg>
        Section 2
      </IdleTab>
      <Spacer />
      <Overflow />
    </ViewTabs>
    <ViewPane>
      <Canvas><ModelView /></Canvas>
      <ScrollColumn $w={20}>
        <Chevron dir="up" />
        <Spacer /><ScrollThumb /><Spacer />
        <Chevron />
      </ScrollColumn>
    </ViewPane>
    <HScroll><Chevron dir="right" /><Grip /></HScroll>
    <ViewTabs><Spacer /><Overflow /></ViewTabs>
    <ViewPane $grow>
      <Canvas $w={636} />
      <ScrollColumn $w={18} />
      <LowerSplit />
      <Canvas />
      <ScrollColumn $w={20}>
        <Chevron dir="up" />
        <Spacer $grow={8} /><ScrollThumb /><Spacer $grow={7} />
      </ScrollColumn>
    </ViewPane>
  </Views>
);

const DwgExport = () => (
  <ExportDialog aria-label="DWG Export">
    <TitleBar>
      DWG Export<Spacer />
      <BareButton aria-label="Help">?</BareButton>
      <BareButton aria-label="Close"><CloseIcon color="#8c8c8c" /></BareButton>
    </TitleBar>
    <ExportBody>
      <SetupGroup>
        <legend>Select Export Setup</legend>
        <Line>
          <Combo label="Export setup" value="<in-session export setup>" width={315} />
          <PushButton $w={21}>...</PushButton>
        </Line>
      </SetupGroup>
      <ViewsGroup>
        <legend>Select Views And Sheets To Export</legend>
        <ViewsColumns>
          <PreviewColumn>
            <PreviewLabel>Preview of 3D View: {'{3D}'}</PreviewLabel>
            <PreviewFrame><PreviewView /></PreviewFrame>
          </PreviewColumn>
          <ListColumn>
            <ExportRow>
              <label htmlFor="export-range">Export:</label>
              <Combo id="export-range" label="Export" value="<current view/sheet only>" width={208} />
            </ExportRow>
            <IconBar $gap={8} $top={44} $left={1}>
              <BareButton aria-label="New set"><NewIcon /></BareButton>
              <BareButton aria-label="Duplicate set"><CopyIcon /></BareButton>
              <BareButton aria-label="Rename set"><RenameIcon /></BareButton>
              <BareButton aria-label="Delete set"><DeleteIcon /></BareButton>
            </IconBar>
            <SheetFrame>
              <SheetTable>
                <colgroup><col width="90" /><col width="90" /><col /></colgroup>
                <thead><tr><th>Include</th><th>Type</th><th>Name</th></tr></thead>
                <tbody>
                  <tr>
                    <td>
                      <CheckWrap>
                        <CheckBox type="checkbox" defaultChecked disabled aria-label="Include 3D view" />
                        <Svg width="13" height="13" viewBox="0 0 13 13" fill="none" stroke="#b0b0b0" strokeWidth="1.500"><path d="M3 6.500l2.500 3l4.500-6" /></Svg>
                      </CheckWrap>
                    </td>
                    <td><HouseIcon size={15} /></td>
                    <td><NameLink href="#view">3D View: {'{3D}'}</NameLink></td>
                  </tr>
                  <tr><td /><td /><td /></tr>
                </tbody>
              </SheetTable>
            </SheetFrame>
          </ListColumn>
        </ViewsColumns>
      </ViewsGroup>
    </ExportBody>
    <ExportFooter>
      <PushButton $w={88}>Next...</PushButton>
      <PushButton $w={88}>Cancel</PushButton>
    </ExportFooter>
    <GripCorner><Grip /></GripCorner>
  </ExportDialog>
);

const LayerGrid = () => (
  <GridFrame>
    <GridTable>
      <colgroup>
        <col width="252" /><col width="133" /><col width="101" /><col /><col width="133" /><col width="103" /><col />
      </colgroup>
      <thead>
        <tr><th rowSpan={2}>Category</th><th colSpan={3}>Projection</th><th colSpan={3}>Cut</th></tr>
        <tr>
          <th>Layer</th><th>Color ID</th><th>Layer modifiers</th>
          <th>Layer</th><th>Color ID</th><th>Layer modifiers</th>
        </tr>
      </thead>
      <tbody>
        {rows.map((r, i) => (
          <tr key={i}>
            <TreeCell><TreeLine><TreeLines root={r.root} box={!r.leaf} />{r.name}</TreeLine></TreeCell>
            <GridCell $off={r.root}>{r.layer}</GridCell>
            <GridCell $off={r.root}>{r.color}</GridCell>
            <GridCell $off={r.root} />
            <GridCell $off={!r.cut}>{r.cut}</GridCell>
            <GridCell $off={!r.cut}>{r.cut && r.color}</GridCell>
            <GridCell $off={!r.cut} />
          </tr>
        ))}
      </tbody>
    </GridTable>
    <ScrollColumn $w={16}>
      <Chevron dir="up" />
      <Spacer $grow={4} />
      <ScrollThumb />
      <Spacer $grow={252} />
      <Chevron />
    </ScrollColumn>
  </GridFrame>
);

const ModifySetup = () => (
  <SetupDialog aria-label="Modify DWG/DXF Export Setup">
    <TitleBar $dark>
      Modify DWG/DXF Export Setup<Spacer />
      <BareButton aria-label="Help">?</BareButton>
      <BareButton aria-label="Close"><CloseIcon color="#fff" /></BareButton>
    </TitleBar>
    <SetupBody>
      <SideGroup>
        <legend>Select Export Setup</legend>
        <SetupList><SetupItem>&lt;in-session export setup&gt;</SetupItem></SetupList>
        <IconBar $gap={11} $top={6} $left={6}>
          <BareButton aria-label="New setup"><NewIcon /></BareButton>
          <BareButton aria-label="Duplicate setup"><CopyIcon /></BareButton>
          <BareButton aria-label="Rename setup"><RenameIcon blue /></BareButton>
          <BareButton aria-label="Delete setup"><DeleteIcon red /></BareButton>
        </IconBar>
      </SideGroup>
      <TabsArea>
        <TabStrip role="tablist">
          {dialogTabs.map(([name, w], i) => (
            <DialogTab key={name} role="tab" aria-selected={i === 0} $w={w} $active={i === 0}>{name}</DialogTab>
          ))}
        </TabStrip>
        <TabPanel role="tabpanel">
          <FormRow>
            <label htmlFor="layer-options">Export layer options:</label>
            <Combo id="layer-options" label="Export layer options" value="Export all properties BYLAYER, and create new layers for overrides" />
          </FormRow>
          <Rule />
          <FormRow>
            <label htmlFor="layer-standard">Load layers from standards:</label>
            <Combo id="layer-standard" label="Load layers from standards" value={'C:\\ProgramData\\Autodesk\\RVT 2019\\exportlayers-dwg-ISO13567.txt'} />
          </FormRow>
          <LayerGrid />
          <GridActions>
            <PushButton $w={73}>Expand All</PushButton>
            <PushButton $w={73}>Collapse All</PushButton>
            <Divider />
            <PushButton $w={148}>Add/Edit Modifiers for All...</PushButton>
          </GridActions>
        </TabPanel>
      </TabsArea>
    </SetupBody>
    <SetupFooter>
      <PushButton $w={88} $default>OK</PushButton>
      <PushButton $w={88}>Cancel</PushButton>
    </SetupFooter>
    <GripCorner><Grip /></GripCorner>
  </SetupDialog>
);

export default function App() {
  return (
    <Desktop>
      <GlobalStyle />
      <RevitWindow>
        <Header>
          <QuickAccess>
            <QuickIcons />
            <TitleText>Autodesk Revit 2019.2 - STUDENT VERSION - BCE_Food</TitleText>
            <Spacer />
            <TitleText $w={16}>erse</TitleText>
          </QuickAccess>
          <TabRow>
            {ribbonTabs.map(([name, w]) => <RibbonTab key={name} $w={w}>{name}</RibbonTab>)}
            <RibbonTab $w={56} $active>Modify</RibbonTab>
            <RibbonTab $w={48} aria-label="Minimize ribbon">
              <Svg width="48" height="10" viewBox="0 0 48 10"><rect x="22.500" y="1.500" width="16" height="8" rx="2" fill="#c8c8c8" stroke="#444" /><path d="M28 7l3-3l3 3z" fill="#222" /></Svg>
            </RibbonTab>
          </TabRow>
        </Header>
        <RevitRibbon />
        <OptionsBar />
        <Workspace>
          <PropertiesPanel />
          <ViewsArea />
        </Workspace>
      </RevitWindow>
      <DwgExport />
      <ModifySetup />
    </Desktop>
  );
}
